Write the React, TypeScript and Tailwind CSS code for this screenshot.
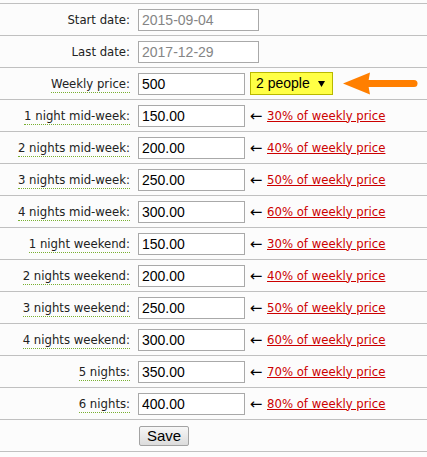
import React from "react";

const LABEL_FONT = "font-[family-name:'DejaVu_Sans_Condensed','DejaVu_Sans',sans-serif]";
const ARROW_FONT = "font-[family-name:'DejaVu_Sans',sans-serif]";
const ARIAL = "font-[family-name:'Liberation_Sans',Arial,sans-serif]";

const priceRows = [
  { label: "1 night mid-week:", value: "150.00", pct: "30%" },
  { label: "2 nights mid-week:", value: "200.00", pct: "40%" },
  { label: "3 nights mid-week:", value: "250.00", pct: "50%" },
  { label: "4 nights mid-week:", value: "300.00", pct: "60%" },
  { label: "1 night weekend:", value: "150.00", pct: "30%" },
  { label: "2 nights weekend:", value: "200.00", pct: "40%" },
  { label: "3 nights weekend:", value: "250.00", pct: "50%" },
  { label: "4 nights weekend:", value: "300.00", pct: "60%" },
  { label: "5 nights:", value: "350.00", pct: "70%" },
  { label: "6 nights:", value: "400.00", pct: "80%" },
];

function Row({ label, dotted, children }: { label?: string; dotted?: boolean; children: React.ReactNode }) {
  return (
    <div className="grid h-[32px] grid-cols-[138px_1fr] items-center border-b border-[#c0c0c0]">
      <div className={`pr-[8px] text-right text-[13px] leading-[16px] text-[#222222] ${LABEL_FONT}`}>
        {label ? (
          dotted ? (
            <span className="border-b border-dotted border-[#78b030] pb-[1px]">{label}</span>
          ) : (
            <span>{label}</span>
          )
        ) : null}
      </div>
      <div className="flex items-center">{children}</div>
    </div>
  );
}

export default function App() {
  return (
    <div className="min-h-[457px] bg-[#fcfcfc] pt-[3px]">
      <div className="border-t border-[#c0c0c0]">
        <Row label="Start date:">
          <input
            readOnly
            value="2015-09-04"
            className={`h-[22px] w-[121px] border border-[#a9a9a9] bg-white px-[3px] text-[14px] text-[#858585] outline-none ${ARIAL}`}
          />
        </Row>
        <Row label="Last date:">
          <input
            readOnly
            value="2017-12-29"
            className={`h-[22px] w-[121px] border border-[#a9a9a9] bg-white px-[3px] text-[14px] text-[#858585] outline-none ${ARIAL}`}
          />
        </Row>
        <Row label="Weekly price:" dotted>
          <input
            readOnly
            value="500"
            className={`h-[22px] w-[107px] border border-[#a9a9a9] bg-white px-[3px] text-[14px] text-black outline-none ${ARIAL}`}
          />
          <div
            className={`ml-[5px] flex h-[23px] w-[83px] items-center border border-[#b8b800] bg-[#ffff45] pl-[5px] text-[14px] text-black ${ARIAL}`}
          >
            <span>2 people</span>
            <svg width="7" height="6" viewBox="0 0 7 6" className="ml-[8px]">
              <polygon points="0,0 7,0 3.5,6" fill="#000" />
            </svg>
          </div>
          <svg width="75" height="24" viewBox="0 0 75 24" className="ml-[10px]">
            <polygon points="0,11.5 27,0.5 25,11.5 27,22.5" fill="#ff7f00" />
            <line x1="24" y1="11.5" x2="71" y2="11.5" stroke="#ff7f00" strokeWidth="7" strokeLinecap="round" />
          </svg>
        </Row>
        {priceRows.map((r) => (
          <Row key={r.label} label={r.label} dotted>
            <input
              readOnly
              value={r.value}
              className={`h-[22px] w-[107px] border border-[#a9a9a9] bg-white px-[3px] text-[14px] text-black outline-none ${ARIAL}`}
            />
            <span className={`ml-[4px] inline-block w-[14px] text-center text-[15px] leading-[16px] text-black ${ARROW_FONT}`}>←</span>
            <a
              href="#"
              className={`ml-[4px] text-[13px] text-[#cc0000] underline ${LABEL_FONT}`}
            >
              {r.pct} of weekly price
            </a>
          </Row>
        ))}
        <Row>
          <button
            className={`ml-[1px] h-[20px] w-[50px] rounded-[2px] border border-[#a3a3a3] bg-linear-to-b from-[#f7f7f7] to-[#dcdcdc] text-[15px] leading-[16px] text-black ${ARIAL}`}
          >
            Save
          </button>
        </Row>
      </div>
    </div>
  );
}
